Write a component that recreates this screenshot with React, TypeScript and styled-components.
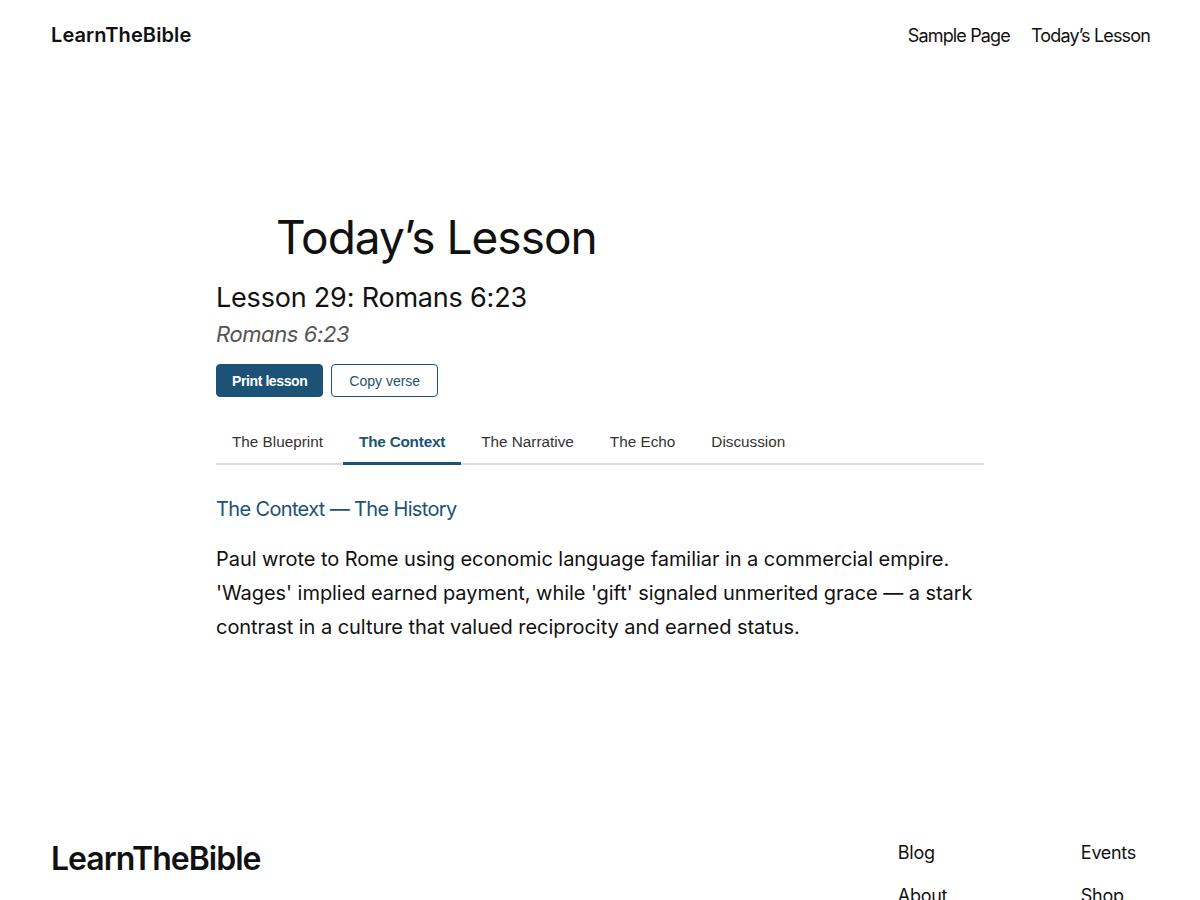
import { useState } from 'react'
import styled, { createGlobalStyle } from 'styled-components'

const GlobalStyle = createGlobalStyle`
  html, body {
    margin: 0;
    padding: 0;
    background: #ffffff;
  }
  body {
    font-family: Inter, "Noto Sans", sans-serif;
    color: #111111;
  }
`

const tabs = ['The Blueprint', 'The Context', 'The Narrative', 'The Echo', 'Discussion']

const App = () => {
  const [active, setActive] = useState(1)

  return (
    <>
      <GlobalStyle />
      <Page>
        <Header>
          <Logo>LearnTheBible</Logo>
          <Nav>
            <NavLink>Sample Page</NavLink>
            <NavLink>Today’s Lesson</NavLink>
          </Nav>
        </Header>

        <Main>
          <PageTitle>Today’s Lesson</PageTitle>
          <Column>
            <LessonTitle>Lesson 29: Romans 6:23</LessonTitle>
            <Reference>Romans 6:23</Reference>
            <Actions>
              <Button primary>Print lesson</Button>
              <Button>Copy verse</Button>
            </Actions>
            <TabList>
              {tabs.map((t, i) => (
                <Tab key={t} active={i === active} onClick={() => setActive(i)}>
                  {t}
                </Tab>
              ))}
            </TabList>
            <SectionTitle>The Context — The History</SectionTitle>
            <Body>
              Paul wrote to Rome using economic language familiar in a commercial empire.
              'Wages' implied earned payment, while 'gift' signaled unmerited grace — a stark
              contrast in a culture that valued reciprocity and earned status.
            </Body>
          </Column>
        </Main>

        <Footer>
          <FooterLogo>LearnTheBible</FooterLogo>
          <FooterLinks>
            <FooterLink>Blog</FooterLink>
            <FooterLink>Events</FooterLink>
            <FooterLink>About</FooterLink>
            <FooterLink>Shop</FooterLink>
          </FooterLinks>
        </Footer>
      </Page>
    </>
  )
}

const Page = styled.div`
  width: 1200px;
  height: 900px;
  overflow: hidden;
`

const Header = styled.header`
  display: flex;
  justify-content: space-between;
  align-items: center;
  height: 70px;
  padding: 0 50px 0 51px;
`

const Logo = styled.div`
  font-size: 20px;
  font-weight: 600;
  letter-spacing: 0.1px;
  color: #111;
`

const Nav = styled.nav`
  display: flex;
  gap: 21px;
`

const NavLink = styled.a`
  font-size: 18px;
  letter-spacing: -0.85px;
  color: #111;
  cursor: pointer;
`

const Main = styled.main`
  padding-top: 136px;
  height: 612px;
`

const PageTitle = styled.h1`
  margin: 0 0 0 276px;
  font-size: 46px;
  font-weight: 400;
  line-height: 62px;
  letter-spacing: -1px;
  color: #111;
`

const Column = styled.div`
  width: 768px;
  margin: 0 auto;
`

const LessonTitle = styled.h2`
  margin: 12px 0 0;
  font-size: 27px;
  font-weight: 400;
  line-height: 36px;
  letter-spacing: -0.2px;
`

const Reference = styled.p`
  margin: 3px 0 0;
  font-size: 22px;
  font-style: italic;
  line-height: 30px;
  letter-spacing: -0.4px;
  color: #555;
`

const Actions = styled.div`
  display: flex;
  gap: 8px;
  margin-top: 15px;
`

const Button = styled.button<{ primary?: boolean }>`
  height: 33px;
  padding: 0 ${p => (p.primary ? 15 : 17)}px;
  border-radius: 4px;
  border: 1px solid #1b5276;
  background: ${p => (p.primary ? '#1b5276' : '#ffffff')};
  color: ${p => (p.primary ? '#ffffff' : '#1b5276')};
  font-family: "Liberation Sans", Arial, sans-serif;
  font-size: 14px;
  font-weight: ${p => (p.primary ? 600 : 400)};
  letter-spacing: ${p => (p.primary ? '-0.4px' : '0')};
  cursor: pointer;
`

const TabList = styled.div`
  display: flex;
  gap: 4px;
  margin-top: 21px;
  border-bottom: 2px solid #dddddd;
`

const Tab = styled.button<{ active?: boolean }>`
  height: 47px;
  margin-bottom: -2px;
  padding: 3px 16px 0;
  border: none;
  border-bottom: 3px solid ${p => (p.active ? '#1b5276' : 'transparent')};
  background: none;
  font-family: "Liberation Sans", Arial, sans-serif;
  font-size: 15.3px;
  font-weight: ${p => (p.active ? 700 : 400)};
  letter-spacing: ${p => (p.active ? '-0.2px' : '0')};
  color: ${p => (p.active ? '#1b5276' : '#333')};
  cursor: pointer;
`

const SectionTitle = styled.h3`
  margin: 30px 0 0;
  font-size: 20px;
  font-weight: 400;
  line-height: 28px;
  letter-spacing: -0.65px;
  color: #1b5276;
`

const Body = styled.p`
  margin: 19px 0 0;
  font-size: 20px;
  line-height: 34px;
  letter-spacing: -0.05px;
  color: #111;
`

const Footer = styled.footer`
  display: flex;
  justify-content: space-between;
  padding: 0 50px 0 51px;
`

const FooterLogo = styled.div`
  margin-top: 21px;
  font-size: 32px;
  font-weight: 600;
  letter-spacing: -1px;
  color: #111;
`

const FooterLinks = styled.div`
  display: grid;
  grid-template-columns: 183px auto;
  row-gap: 19px;
  margin-top: 23px;
  margin-right: 14px;
`

const FooterLink = styled.a`
  font-size: 18px;
  line-height: 24px;
  letter-spacing: -0.3px;
  color: #111;
`

export default App
